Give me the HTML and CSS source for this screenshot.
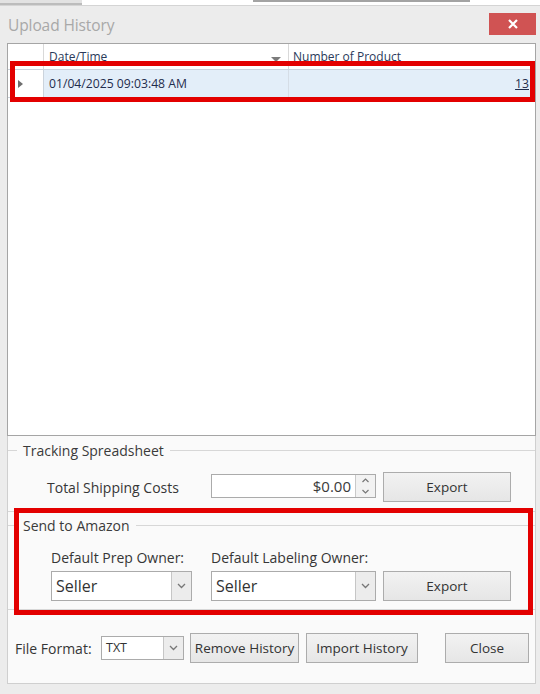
FILE: index.html
```html
<!DOCTYPE html>
<html>
<head>
<meta charset="utf-8">
<link rel="stylesheet" href="styles.css">
</head>
<body>
<div class="topstrip">
  <div class="seg seg-a"></div>
  <div class="seg seg-b"></div>
  <div class="seg seg-c"></div>
</div>
<div class="dialog">
  <div class="titlebar">
    <span class="title">Upload History</span>
    <button class="close" aria-label="Close">
      <svg width="10" height="10" viewBox="0 0 10 10"><path d="M1 1 L9 9 M9 1 L1 9" stroke="#fff" stroke-width="2.2" fill="none"/></svg>
    </button>
  </div>

  <div class="grid">
    <div class="grow ghead">
      <div class="gcell gind"></div>
      <div class="gcell gdate">Date/Time<span class="sort"></span></div>
      <div class="gcell gnum">Number of Product</div>
    </div>
    <div class="grow gdata">
      <div class="gcell gind"><span class="rowarrow"></span></div>
      <div class="gcell gdate">01/04/2025 09:03:48 AM</div>
      <div class="gcell gnum"><a class="count">13</a></div>
    </div>
  </div>

  <div class="panel">
    <div class="group group1">
      <div class="ghd"><span class="gl"></span><span class="gtitle">Tracking Spreadsheet</span><span class="gr"></span></div>
      <div class="row1">
        <span class="lbl lbl-total">Total Shipping Costs</span>
        <div class="numbox">
          <span class="numval">$0.00</span>
          <div class="spin">
            <span class="sp"><svg width="7" height="5" viewBox="0 0 7 5"><path d="M0.5 4 L3.5 1 L6.5 4" stroke="#777" stroke-width="1.2" fill="none"/></svg></span>
            <span class="sp"><svg width="7" height="5" viewBox="0 0 7 5"><path d="M0.5 1 L3.5 4 L6.5 1" stroke="#777" stroke-width="1.2" fill="none"/></svg></span>
          </div>
        </div>
        <button class="btn btn-export">Export</button>
      </div>
    </div>

    <div class="group group2">
      <div class="ghd"><span class="gl"></span><span class="gtitle">Send to Amazon</span><span class="gr"></span></div>
      <div class="labels">
        <span class="lbl lbl-prep">Default Prep Owner:</span>
        <span class="lbl">Default Labeling Owner:</span>
      </div>
      <div class="row2">
        <div class="combo combo-prep"><span class="cval">Seller</span><span class="dd"><svg width="9" height="6" viewBox="0 0 9 6"><path d="M1 1 L4.5 4.5 L8 1" stroke="#777" stroke-width="1.3" fill="none"/></svg></span></div>
        <div class="combo combo-lab"><span class="cval">Seller</span><span class="dd"><svg width="9" height="6" viewBox="0 0 9 6"><path d="M1 1 L4.5 4.5 L8 1" stroke="#777" stroke-width="1.3" fill="none"/></svg></span></div>
        <button class="btn btn-export">Export</button>
      </div>
    </div>

    <div class="bottom">
      <span class="lbl lbl-ff">File Format:</span>
      <div class="combo combo-ff"><span class="cval small">TXT</span><span class="dd"><svg width="9" height="6" viewBox="0 0 9 6"><path d="M1 1 L4.5 4.5 L8 1" stroke="#777" stroke-width="1.3" fill="none"/></svg></span></div>
      <button class="btn btn-remove">Remove History</button>
      <button class="btn btn-import">Import History</button>
      <button class="btn btn-close">Close</button>
    </div>
  </div>
</div>
<div class="mark mark1"></div>
<div class="mark mark2"></div>
</body>
</html>
```
FILE: styles.css
```css
html, body {
  margin: 0;
  padding: 0;
}
body {
  width: 540px;
  height: 694px;
  overflow: hidden;
  position: relative;
  background: #ececec;
  font-family: "Open Sans", "Noto Sans", sans-serif;
  color: #333;
}
.topstrip {
  display: flex;
  height: 5px;
  background: #ffffff;
  border-bottom: 1px solid #d4d4d4;
}
.seg-a {
  width: 82px;
  background: #e2e2e2;
  border-bottom: 2px solid #bcbcbc;
}
.seg-b { width: 171px; }
.seg-c {
  width: 217px;
  border-top: 2px solid #a3a3a3;
}
.dialog {
  background: #ececec;
}
.titlebar {
  height: 37px;
  display: flex;
  align-items: center;
  justify-content: space-between;
  padding: 0 4px 0 8px;
}
.title {
  font-size: 15.5px;
  color: #a8a8a8;
  letter-spacing: -0.1px;
}
.close {
  width: 47px;
  height: 22px;
  margin-top: -1px;
  border: 0;
  padding: 0;
  background: #d05353;
  display: flex;
  align-items: center;
  justify-content: center;
}

/* grid */
.grid {
  margin-left: 7px;
  width: 529px;
  height: 393px;
  box-sizing: border-box;
  border: 1px solid #a5a5a5;
  background: #ffffff;
}
.grow {
  display: flex;
}
.ghead {
  height: 25px;
}
.gcell {
  box-sizing: border-box;
  display: flex;
  align-items: center;
}
.gind {
  width: 36px;
  border-right: 1px solid #d9d9d9;
}
.gdate {
  width: 245px;
  border-right: 1px solid #d9d9d9;
  padding-left: 5px;
}
.gnum {
  flex: 1;
  padding-left: 4px;
}
.ghead .gcell {
  font-size: 12px;
  color: #2a3a5a;
  padding-top: 0;
}
.ghead .gdate {
  position: relative;
}
.sort {
  position: absolute;
  right: 7px;
  top: 13px;
  width: 0;
  height: 0;
  border-left: 5px solid transparent;
  border-right: 5px solid transparent;
  border-top: 5px solid #7c7c7c;
}
.gdata {
  height: 27px;
  border-top: 1px solid #cbd3dc;
  border-bottom: 1px solid #cbd3dc;
}
.gdata .gdate,
.gdata .gnum {
  background: #e3eef9;
  font-size: 12.2px;
  color: #1f2d4d;
}
.gdata .gind {
  background: #ffffff;
  border-right-color: #cbd3dc;
  padding-left: 10px;
}
.gdata .gdate {
  border-right-color: #d5dde6;
}
.gdata .gnum {
  justify-content: flex-end;
  padding-right: 6px;
}
.rowarrow {
  width: 0;
  height: 0;
  border-top: 4px solid transparent;
  border-bottom: 4px solid transparent;
  border-left: 5px solid #6e6e6e;
}
.count {
  text-decoration: underline;
  color: #1f2d4d;
}

/* lower panel */
.panel {
  margin-left: 7px;
  width: 529px;
  box-sizing: border-box;
  background: #fafafa;
  border: 1px solid #cfcfcf;
  border-top: 0;
  padding: 4px 0 20px 0;
}
.group {
  border-bottom: 1px solid #d7d7d7;
}
.ghd {
  display: flex;
  align-items: center;
  height: 20px;
}
.gl {
  width: 9px;
  height: 1px;
  background: #d7d7d7;
}
.gr {
  flex: 1;
  height: 1px;
  background: #d7d7d7;
}
.gtitle {
  font-size: 14px;
  color: #3b3b3b;
  padding: 0 6px;
}
.lbl {
  font-size: 14px;
  color: #363636;
}
.group1 {
  padding-bottom: 9px;
}
.row1 {
  display: flex;
  align-items: center;
  margin-top: 12px;
  height: 30px;
}
.lbl-total {
  margin-left: 39px;
  width: 164px;
}
.numbox {
  width: 165px;
  height: 24px;
  box-sizing: border-box;
  border: 1px solid #ababab;
  background: #fff;
  display: flex;
  margin-top: -3px;
}
.numval {
  flex: 1;
  text-align: right;
  font-size: 15px;
  line-height: 22px;
  padding-right: 4px;
  color: #3a3a3a;
}
.spin {
  width: 19px;
  border-left: 1px solid #c9c9c9;
  background: #f2f2f2;
  display: flex;
  flex-direction: column;
}
.sp {
  flex: 1;
  display: flex;
  align-items: center;
  justify-content: center;
}
.btn {
  box-sizing: border-box;
  height: 30px;
  border: 1px solid #acacac;
  background: linear-gradient(#f2f2f2, #e6e6e6);
  font-family: "Open Sans", "Noto Sans", sans-serif;
  font-size: 13.5px;
  color: #333;
  padding: 0;
}
.btn-export {
  width: 128px;
  margin-left: 7px;
}
.group2 {
  margin-top: 3px;
  padding-bottom: 8px;
}
.labels {
  display: flex;
  margin-top: 12px;
  height: 20px;
  align-items: center;
}
.lbl-prep {
  margin-left: 43px;
  width: 160px;
}
.row2 {
  display: flex;
  margin-top: 4px;
  align-items: center;
}
.combo {
  box-sizing: border-box;
  height: 30px;
  border: 1px solid #ababab;
  background: #fff;
  display: flex;
}
.combo-prep {
  width: 141px;
  margin-left: 43px;
}
.combo-lab {
  width: 165px;
  margin-left: 19px;
}
.cval {
  flex: 1;
  font-size: 16px;
  line-height: 28px;
  padding-left: 4px;
  color: #333;
}
.cval.small {
  font-size: 12.5px;
  line-height: 22px;
  padding-left: 4px;
}
.dd {
  width: 19px;
  border-left: 1px solid #c6c6c6;
  background: #ececec;
  display: flex;
  align-items: center;
  justify-content: center;
}
.bottom {
  display: flex;
  align-items: center;
  margin-top: 23px;
  height: 30px;
}
.lbl-ff {
  margin-left: 7px;
  width: 86px;
}
.combo-ff {
  width: 83px;
  height: 24px;
}
.btn-remove {
  width: 109px;
  margin-left: 6px;
}
.btn-import {
  width: 112px;
  margin-left: 7px;
}
.btn-close {
  width: 84px;
  margin-left: 27px;
}

/* annotation marks */
.mark {
  position: absolute;
  box-sizing: border-box;
  border: 5px solid #e30000;
}
.mark1 {
  left: 10px;
  top: 61px;
  width: 525px;
  height: 41px;
}
.mark2 {
  left: 14px;
  top: 508px;
  width: 519px;
  height: 107px;
}
```
